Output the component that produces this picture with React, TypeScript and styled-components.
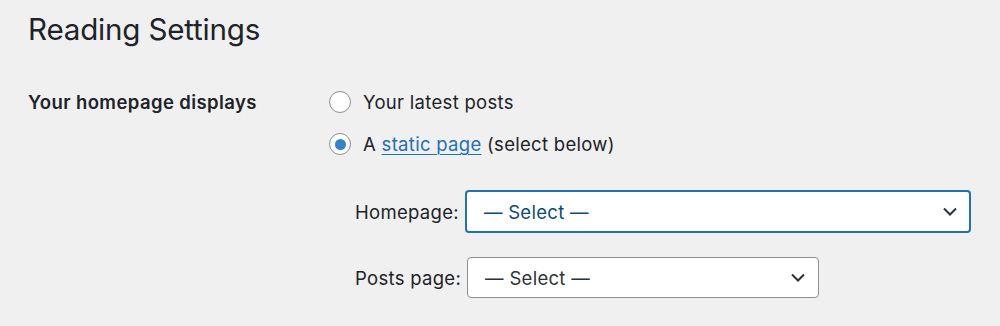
import React from 'react'
import styled, { createGlobalStyle } from 'styled-components'

const GlobalStyle = createGlobalStyle`
  html, body {
    margin: 0;
    padding: 0;
    background: #f0f0f1;
  }
  body {
    font-family: Inter, "Liberation Sans", Arial, sans-serif;
    color: #1d2327;
  }
`

const Page = styled.div`
  width: 1000px;
  height: 326px;
  padding: 11px 0 0 28px;
  box-sizing: border-box;
  overflow: hidden;
`

const Title = styled.h1`
  margin: 0;
  font-size: 29.6px;
  font-weight: 400;
  line-height: 36px;
  letter-spacing: -0.2px;
  color: #1d2327;
`

const FormRow = styled.div`
  display: grid;
  grid-template-columns: 301px 1fr;
  margin-top: 43px;
`

const RowLabel = styled.div`
  font-size: 18.5px;
  font-weight: 600;
  letter-spacing: 0.4px;
  line-height: 24px;
`

const Options = styled.div`
  display: flex;
  flex-direction: column;
`

const RadioLine = styled.label`
  display: flex;
  align-items: center;
  gap: 12px;
  height: 24px;
  font-size: 18.5px;
  letter-spacing: 0.3px;
  line-height: 24px;
  margin-bottom: 18px;
`

const Radio = styled.span<{ $checked?: boolean }>`
  width: 22px;
  height: 22px;
  border-radius: 50%;
  border: 1px solid #8c8f94;
  background: #fff;
  box-sizing: border-box;
  display: flex;
  align-items: center;
  justify-content: center;
  flex-shrink: 0;

  &::after {
    content: '';
    display: ${(p) => (p.$checked ? 'block' : 'none')};
    width: 11px;
    height: 11px;
    border-radius: 50%;
    background: #3582c4;
  }
`

const Link = styled.a`
  color: #2271b1;
  text-decoration: underline;
  text-underline-offset: 3px;
  text-decoration-thickness: 1px;
`

const SubList = styled.div`
  display: flex;
  flex-direction: column;
  gap: 24px;
  padding-left: 26px;
  margin-top: 16px;
`

const SelectRow = styled.div`
  display: flex;
  align-items: center;
  gap: 6px;
  font-size: 18.5px;
  letter-spacing: 0.3px;
`

const Select = styled.div<{ $focused?: boolean; $width: number }>`
  width: ${(p) => p.$width}px;
  height: ${(p) => (p.$focused ? 43 : 41)}px;
  box-sizing: border-box;
  background: #fff;
  border-radius: 4px;
  border: ${(p) => (p.$focused ? '2px solid #2271b1' : '1px solid #8c8f94')};
  display: flex;
  align-items: center;
  justify-content: space-between;
  padding: 0 ${(p) => (p.$focused ? 12 : 13)}px 0 17px;
  color: ${(p) => (p.$focused ? '#0a4b78' : '#2c3338')};
`

const Chevron = () => (
  <svg width="14" height="9" viewBox="0 0 14 9" fill="none">
    <path d="M1 1.5 L7 7.5 L13 1.5" stroke="#2c3338" strokeWidth="2" />
  </svg>
)

export default function App() {
  return (
    <Page>
      <GlobalStyle />
      <Title>Reading Settings</Title>
      <FormRow>
        <RowLabel>Your homepage displays</RowLabel>
        <Options>
          <RadioLine>
            <Radio />
            <span>Your latest posts</span>
          </RadioLine>
          <RadioLine>
            <Radio $checked />
            <span>
              A <Link>static page</Link> (select below)
            </span>
          </RadioLine>
          <SubList>
            <SelectRow>
              <span>Homepage:</span>
              <Select $focused $width={506}>
                <span>— Select —</span>
                <Chevron />
              </Select>
            </SelectRow>
            <SelectRow>
              <span>Posts page:</span>
              <Select $width={352}>
                <span>— Select —</span>
                <Chevron />
              </Select>
            </SelectRow>
          </SubList>
        </Options>
      </FormRow>
    </Page>
  )
}
